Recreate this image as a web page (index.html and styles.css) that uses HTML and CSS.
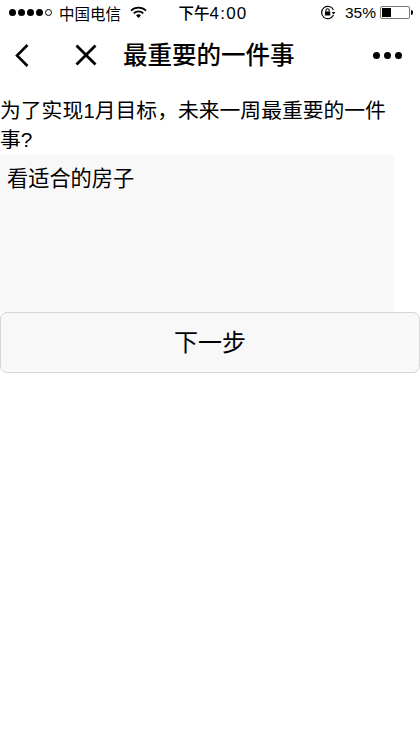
FILE: index.html
```html
<!DOCTYPE html>
<html lang="zh-CN">
<head>
  <meta charset="UTF-8" />
  <meta name="viewport" content="width=device-width, initial-scale=1" />
  <title>最重要的一件事</title>
  <link rel="stylesheet" href="styles.css">
</head>
<body>
  <!-- 状态栏 -->
  <div class="status-bar">
    <div class="status-left">
      <span class="signal">
        <i class="dot"></i><i class="dot"></i><i class="dot"></i><i class="dot"></i><i class="dot empty"></i>
      </span>
      <span class="carrier">中国电信</span>
      <svg class="wifi" viewBox="0 0 18 13" xmlns="http://www.w3.org/2000/svg">
        <path d="M1 4.6a11.5 11.5 0 0 1 16 0" fill="none" stroke="#000" stroke-width="1.7" />
        <path d="M3.9 7.4a7.4 7.4 0 0 1 10.2 0" fill="none" stroke="#000" stroke-width="1.7" />
        <path d="M6.4 9.6a3.7 3.7 0 0 1 5.2 0L9 12.4z" fill="#000" />
      </svg>
    </div>
    <div class="status-time">下午<span class="time-digits">4:00</span></div>
    <div class="status-right">
      <svg class="lock" viewBox="0 0 15 14" xmlns="http://www.w3.org/2000/svg">
        <path d="M12.6 9.4A5.8 5.8 0 1 1 12.6 4.6" fill="none" stroke="#000" stroke-width="1.1" />
        <path d="M11 6.6h3.4l-1.7 2.2z" fill="#000" />
        <rect x="4.6" y="6" width="5" height="3.8" fill="#000" />
        <path d="M5.6 6V5a1.5 1.5 0 0 1 3 0v1" fill="none" stroke="#000" stroke-width="1" />
      </svg>
      <span class="percent">35%</span>
      <span class="battery"><i class="battery-level"></i></span>
      <span class="battery-tip"></span>
    </div>
  </div>

  <!-- 导航 -->
  <header class="nav-bar">
    <svg class="nav-back" viewBox="0 0 16 24" xmlns="http://www.w3.org/2000/svg">
      <path d="M13.5 2 3 12.5 13.5 23" fill="none" stroke="#000" stroke-width="2.6" />
    </svg>
    <svg class="nav-close" viewBox="0 0 22 22" xmlns="http://www.w3.org/2000/svg">
      <path d="M1.5 1.5l19 19M20.5 1.5l-19 19" fill="none" stroke="#000" stroke-width="2.8" />
    </svg>
    <h1 class="nav-title">最重要的一件事</h1>
    <div class="nav-more"><i></i><i></i><i></i></div>
  </header>

  <main class="content">
    <p class="question">为了实现1月目标，未来一周最重要的一件事?</p>
    <div class="answer">看适合的房子</div>
    <button class="next-btn" type="button">下一步</button>
  </main>
</body>
</html>
```

FILE: styles.css
```css
* {
  margin: 0;
  padding: 0;
  box-sizing: border-box;
}

body {
  width: 420px;
  height: 746px;
  overflow: hidden;
  background: #fff;
  color: #000;
  font-family: "Liberation Sans", "Noto Sans CJK SC", sans-serif;
}

/* 状态栏 */
.status-bar {
  height: 27px;
  padding: 0 7px 2px 9px;
  display: flex;
  align-items: center;
  justify-content: space-between;
  font-size: 15.5px;
}
.status-left,
.status-right {
  display: flex;
  align-items: center;
}
.status-left {
  width: 152px;
}
.status-right {
  width: 148px;
  justify-content: flex-end;
}
.signal {
  display: flex;
  gap: 2px;
  margin-right: 7px;
}
.dot {
  width: 7px;
  height: 7px;
  border-radius: 50%;
  background: #000;
}
.dot.empty {
  background: #fff;
  border: 1px solid #000;
}
.carrier {
  font-size: 15.5px;
}
.wifi {
  width: 17px;
  height: 13px;
  margin-left: 9px;
}
.status-time {
  font-size: 15.5px;
  font-weight: 500;
}
.time-digits {
  font-size: 17px;
  letter-spacing: 1.2px;
}
.lock {
  width: 16px;
  height: 15px;
  margin-right: 9px;
}
.percent {
  margin-right: 4px;
}
.battery {
  width: 30px;
  height: 13px;
  border: 1px solid #777;
  border-radius: 2px;
  padding: 1px;
  display: flex;
}
.battery-level {
  width: 35%;
  background: #000;
}
.battery-tip {
  width: 2px;
  height: 5px;
  margin-left: 1px;
  background: #000;
  border-radius: 0 2px 2px 0;
}

/* 导航 */
.nav-bar {
  height: 56px;
  padding: 0 18px 0 14px;
  display: flex;
  align-items: center;
}
.nav-back {
  width: 16px;
  height: 24px;
}
.nav-close {
  width: 22px;
  height: 22px;
  margin-left: 45px;
}
.nav-title {
  margin-left: 26px;
  padding-bottom: 3px;
  font-size: 24.5px;
  font-weight: 500;
  flex: 1;
}
.nav-more {
  display: flex;
  gap: 4px;
}
.nav-more i {
  width: 7px;
  height: 7px;
  border-radius: 50%;
  background: #000;
}

/* 内容 */
.question {
  margin-top: 13px;
  margin-bottom: 1px;
  font-size: 20.8px;
  line-height: 29px;
  width: 394px;
}
.answer {
  width: 394px;
  height: 157px;
  padding: 9px 7px;
  background: #f8f8f8;
  font-size: 21.2px;
  line-height: 30px;
}
.next-btn {
  display: block;
  width: 420px;
  height: 61px;
  padding-bottom: 5px;
  background: #f8f8f8;
  border: 1px solid #d6d6d6;
  border-radius: 7px;
  color: #000;
  font-family: inherit;
  font-size: 24px;
}
```
